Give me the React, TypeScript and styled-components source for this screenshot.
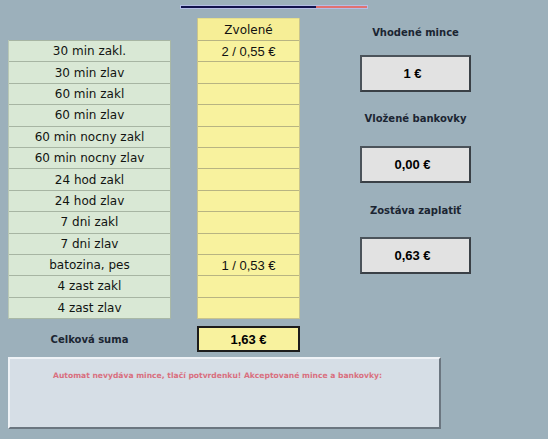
import React from "react";
import styled, { createGlobalStyle } from "styled-components";

const GlobalStyle = createGlobalStyle`
  html, body {
    margin: 0;
    padding: 0;
    background: #9cb0bb;
  }
  body {
    font-family: "DejaVu Sans", "Liberation Sans", sans-serif;
    width: 548px;
    height: 439px;
    overflow: hidden;
  }
`;

const Page = styled.div`
  width: 548px;
  height: 439px;
  padding-top: 5px;
  box-sizing: border-box;
`;

const Progress = styled.div`
  display: flex;
  width: 188px;
  height: 4px;
  margin-left: 180px;
  box-sizing: border-box;
  border: 1px solid #b4bde6;
  div:first-child {
    flex: 0 0 135px;
    background: #12124e;
  }
  div:last-child {
    flex: 1;
    background: #e07272;
  }
`;

const Main = styled.div`
  display: flex;
  padding-left: 8px;
  margin-top: 9px;
`;

const LeftCol = styled.div`
  width: 163px;
  padding-top: 22px;
  display: flex;
  flex-direction: column;
`;

const MidCol = styled.div`
  width: 103px;
  margin-left: 26px;
  display: flex;
  flex-direction: column;
`;

const RightCol = styled.div`
  width: 111px;
  margin-left: 60px;
  display: flex;
  flex-direction: column;
`;

const List = styled.div`
  display: grid;
  grid-template-rows: repeat(13, 21.4px);
  background: #d9e8d5;
  border: 1px solid #a9b8a6;
  border-top: 0;
  border-left-color: #b9c8b6;
`;

const ListRow = styled.div`
  display: flex;
  align-items: center;
  justify-content: center;
  border-top: 1px solid #a7b5a3;
  font-size: 12px;
  color: #111411;
`;

const YellowList = styled.div`
  display: grid;
  grid-template-rows: 22px repeat(13, 21.4px);
  background: #f8f29e;
  border: 1px solid #c9c48d;
  border-top: 0;
`;

const YellowRow = styled.div<{ $head?: boolean }>`
  display: flex;
  align-items: center;
  justify-content: center;
  border-top: 1px solid ${(p) => (p.$head ? "#e6df8c" : "#b8b482")};
  background: ${(p) => (p.$head ? "#f6ee96" : "transparent")};
  font-family: ${(p) => (p.$head ? '"DejaVu Sans", sans-serif' : '"Liberation Sans", sans-serif')};
  font-size: ${(p) => (p.$head ? "12px" : "13px")};
  font-weight: ${(p) => (p.$head ? 500 : 300)};
  color: #111;
`;

const SumLabel = styled.div`
  margin-top: 7px;
  height: 26px;
  display: flex;
  align-items: center;
  justify-content: center;
  font-size: 10px;
  font-weight: bold;
  color: #1b2532;
`;

const SumBox = styled.div`
  margin-top: 7px;
  height: 26px;
  box-sizing: border-box;
  background: #f8f29e;
  border: 2px solid #1c1c1c;
  display: flex;
  align-items: center;
  justify-content: center;
  font-family: "Liberation Sans", sans-serif;
  font-weight: bold;
  font-size: 13px;
  color: #000;
`;

const Group = styled.div<{ $top: number; $gap: number }>`
  display: flex;
  flex-direction: column;
  margin-top: ${(p) => p.$top}px;
  gap: ${(p) => p.$gap}px;
`;

const Label = styled.div`
  height: 16px;
  line-height: 16px;
  text-align: center;
  white-space: nowrap;
  font-size: 10px;
  font-weight: bold;
  color: #1b2532;
`;

const ValueBox = styled.div`
  height: 37px;
  box-sizing: border-box;
  background: #e2e2e2;
  border: 2px solid #4b535a;
  border-right-color: #3a4046;
  border-bottom-color: #3a4046;
  display: flex;
  align-items: center;
  justify-content: center;
  font-family: "Liberation Sans", sans-serif;
  font-weight: bold;
  font-size: 13px;
  color: #000;
  padding-right: 6px;
`;

const InfoPanel = styled.div`
  margin: 5px 0 0 8px;
  width: 433px;
  height: 72px;
  box-sizing: border-box;
  background: #d6dee6;
  border: 2px solid #eef2f6;
  border-right-color: #6b7680;
  border-bottom-color: #6b7680;
  padding: 12px 0 0 43px;
  font-size: 7.6px;
  font-weight: bold;
  color: #d96f7f;
  white-space: nowrap;
`;

const tickets = [
  "30 min zakl.",
  "30 min zlav",
  "60 min zakl",
  "60 min zlav",
  "60 min nocny zakl",
  "60 min nocny zlav",
  "24 hod zakl",
  "24 hod zlav",
  "7 dni zakl",
  "7 dni zlav",
  "batozina, pes",
  "4 zast zakl",
  "4 zast zlav",
];

const chosen: Record<number, string> = {
  0: "2 / 0,55 €",
  10: "1 / 0,53 €",
};

export default function App() {
  return (
    <Page>
      <GlobalStyle />
      <Progress>
        <div />
        <div />
      </Progress>
      <Main>
        <LeftCol>
          <List>
            {tickets.map((t) => (
              <ListRow key={t}>{t}</ListRow>
            ))}
          </List>
          <SumLabel>Celková suma</SumLabel>
        </LeftCol>
        <MidCol>
          <YellowList>
            <YellowRow $head>Zvolené</YellowRow>
            {tickets.map((t, i) => (
              <YellowRow key={t}>{chosen[i] ?? ""}</YellowRow>
            ))}
          </YellowList>
          <SumBox>1,63 €</SumBox>
        </MidCol>
        <RightCol>
          <Group $top={7} $gap={14}>
            <Label>Vhodené mince</Label>
            <ValueBox>1 €</ValueBox>
          </Group>
          <Group $top={19} $gap={19}>
            <Label>Vložené bankovky</Label>
            <ValueBox>0,00 €</ValueBox>
          </Group>
          <Group $top={20} $gap={18}>
            <Label>Zostáva zaplatiť</Label>
            <ValueBox>0,63 €</ValueBox>
          </Group>
        </RightCol>
      </Main>
      <InfoPanel>
        Automat nevydáva mince, tlačí potvrdenku! Akceptované mince a bankovky:
      </InfoPanel>
    </Page>
  );
}
